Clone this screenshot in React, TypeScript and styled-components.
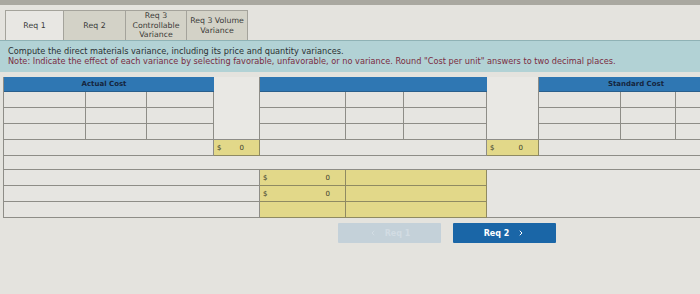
import React from 'react';
import styled, { createGlobalStyle } from 'styled-components';
import { ChevronRight, ChevronLeft } from 'lucide-react';

const Global = createGlobalStyle`
  html, body { margin: 0; padding: 0; background: #e4e3de; overflow: hidden; }
  body { font-family: "DejaVu Sans", Verdana, sans-serif; }
`;

const LINE = '#8e8d87';

const Page = styled.div`
  width: 700px;
  height: 294px;
  overflow: hidden;
  display: flex;
  flex-direction: column;
  background: #e4e3de;
`;

const TopBand = styled.div`
  height: 5px;
  background: #a9a8a0;
`;

const Tabs = styled.div`
  display: flex;
  margin: 5px 0 0 5px;
  height: 30px;
`;

const Tab = styled.div<{ $w: number; $active?: boolean }>`
  width: ${(p) => p.$w}px;
  box-sizing: border-box;
  border-top: 1px solid #a4a39b;
  border-right: 1px solid #a4a39b;
  &:first-child { border-left: 1px solid #a4a39b; }
  background: ${(p) => (p.$active ? '#e8e7e3' : '#d3d2c7')};
  display: flex;
  align-items: center;
  justify-content: center;
  text-align: center;
  font-size: 7.8px;
  line-height: 9.5px;
  color: #3a3a38;
  white-space: nowrap;
`;

const Instructions = styled.div`
  height: 32px;
  box-sizing: border-box;
  background: #b2d2d5;
  border-top: 1px solid #8fb2b5;
  padding: 5px 0 0 8px;
  font-size: 8.2px;
  line-height: 10px;
  white-space: nowrap;
`;

const Lead = styled.div`
  color: #2b3133;
`;

const Note = styled.div`
  color: #7a2d42;
`;

const Grid = styled.div`
  margin: 5px 0 0 3px;
  display: grid;
  grid-template-columns: 82px 61px 67px 46px 86px 58px 83px 52px 82px 55px 57px;
  grid-template-rows: 15px 16px 16px 16px 16px 14px 16px 16px 16px;
  width: 729px;
  border-left: 1px solid ${LINE};
  box-sizing: border-box;
`;

type Place = { $c: number; $cs?: number; $r: number; $rs?: number };

const placed = (p: Place) => `
  grid-column: ${p.$c} / span ${p.$cs ?? 1};
  grid-row: ${p.$r} / span ${p.$rs ?? 1};
`;

const Cell = styled.div<Place>`
  ${(p) => placed(p)}
  box-sizing: border-box;
  border-right: 1px solid ${LINE};
  border-bottom: 1px solid ${LINE};
  background: #e6e5e1;
`;

const OpenCell = styled(Cell)`
  border-right: none;
`;

const HeadCell = styled.div<Place & { $shift?: number }>`
  ${(p) => placed(p)}
  box-sizing: border-box;
  background: #2f77b3;
  border-bottom: 1px solid #2a5f8c;
  color: #15253d;
  font-weight: bold;
  font-size: 7px;
  display: flex;
  align-items: center;
  justify-content: center;
  padding-right: ${(p) => p.$shift ?? 0}px;
`;

const GapCell = styled.div<Place>`
  ${(p) => placed(p)}
  box-sizing: border-box;
  background: #e9e8e4;
  border-right: 1px solid ${LINE};
  border-bottom: 1px solid ${LINE};
`;

const YellowCell = styled.div<Place>`
  ${(p) => placed(p)}
  box-sizing: border-box;
  background: #e2d889;
  border-right: 1px solid #8f8a62;
  border-bottom: 1px solid #8f8a62;
  display: flex;
  align-items: center;
  justify-content: space-between;
  padding: 0 15px 0 3px;
  font-size: 7px;
  color: #3b3a2c;
`;

const Buttons = styled.div`
  display: flex;
  gap: 12px;
  margin-top: 5px;
  padding-left: 338px;
`;

const NavButton = styled.div<{ $primary?: boolean }>`
  width: 103px;
  height: 20px;
  border-radius: 1px;
  background: ${(p) => (p.$primary ? '#1a66a7' : '#c4d1d9')};
  color: ${(p) => (p.$primary ? '#ffffff' : '#d2dce3')};
  font-size: 8px;
  font-weight: bold;
  display: flex;
  align-items: center;
  justify-content: center;
  gap: 8px;
`;

const Money = ({ show = true, ...p }: Place & { show?: boolean }) => (
  <YellowCell {...p}>
    {show ? (
      <>
        <span>$</span>
        <span>0</span>
      </>
    ) : null}
  </YellowCell>
);

export default function App() {
  const dataRows = [2, 3, 4];
  const sections = [1, 5, 9];
  return (
    <>
      <Global />
      <Page>
        <TopBand />
        <Tabs>
          <Tab $w={59} $active>Req 1</Tab>
          <Tab $w={62}>Req 2</Tab>
          <Tab $w={61}>Req 3<br />Controllable<br />Variance</Tab>
          <Tab $w={61}>Req 3 Volume<br />Variance</Tab>
        </Tabs>
        <Instructions>
          <Lead>Compute the direct materials variance, including its price and quantity variances.</Lead>
          <Note>Note: Indicate the effect of each variance by selecting favorable, unfavorable, or no variance. Round "Cost per unit" answers to two decimal places.</Note>
        </Instructions>
        <Grid>
          <HeadCell $c={1} $cs={3} $r={1} $shift={10}>Actual Cost</HeadCell>
          <GapCell $c={4} $r={1} $rs={4} />
          <HeadCell $c={5} $cs={3} $r={1} />
          <GapCell $c={8} $r={1} $rs={4} />
          <HeadCell $c={9} $cs={3} $r={1}>Standard Cost</HeadCell>

          {dataRows.map((r) =>
            sections.map((s) => (
              <React.Fragment key={`${r}-${s}`}>
                <Cell $c={s} $r={r} />
                <Cell $c={s + 1} $r={r} />
                <Cell $c={s + 2} $r={r} />
              </React.Fragment>
            ))
          )}

          <Cell $c={1} $cs={3} $r={5} />
          <Money $c={4} $r={5} />
          <Cell $c={5} $cs={3} $r={5} />
          <Money $c={8} $r={5} />
          <OpenCell $c={9} $cs={3} $r={5} />

          <OpenCell $c={1} $cs={11} $r={6} />

          {[7, 8, 9].map((r) => (
            <React.Fragment key={r}>
              <Cell $c={1} $cs={4} $r={r} />
              <Money $c={5} $r={r} show={r !== 9} />
              <YellowCell $c={6} $cs={2} $r={r} />
            </React.Fragment>
          ))}
          <OpenCell $c={8} $cs={4} $r={7} $rs={3} />
        </Grid>
        <Buttons>
          <NavButton>
            <ChevronLeft size={8} strokeWidth={3} />
            <span>Req 1</span>
          </NavButton>
          <NavButton $primary>
            <span>Req 2</span>
            <ChevronRight size={8} strokeWidth={3} />
          </NavButton>
        </Buttons>
      </Page>
    </>
  );
}
